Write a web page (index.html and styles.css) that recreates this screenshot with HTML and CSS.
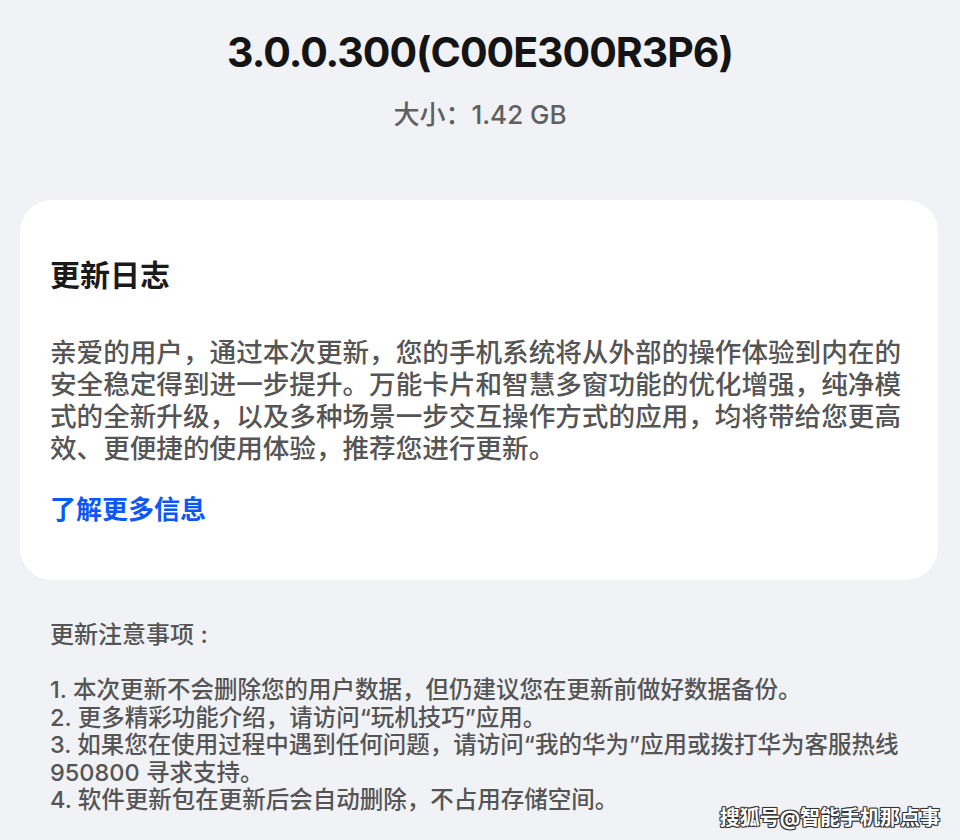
FILE: index.html
```html
<!DOCTYPE html>
<html lang="zh-CN">
<head>
  <meta charset="UTF-8">
  <title>软件更新</title>
  <link rel="stylesheet" href="styles.css">
</head>
<body>

  <div class="header">
    <h1 class="version">3.0.0.300(C00E300R3P6)</h1>
    <div class="size">大小：1.42 GB</div>
  </div>

  <div class="card">
    <h2>更新日志</h2>
    <p class="changelog">亲爱的用户，通过本次更新，您的手机系统将从外部的操作体验到内在的安全稳定得到进一步提升。万能卡片和智慧多窗功能的优化增强，纯净模式的全新升级，以及多种场景一步交互操作方式的应用，均将带给您更高效、更便捷的使用体验，推荐您进行更新。</p>
    <a href="#" class="more-link">了解更多信息</a>
  </div>

  <div class="notes">
    <h3>更新注意事项 :</h3>
    <ol class="note-list">
      <li>1. 本次更新不会删除您的用户数据，但仍建议您在更新前做好数据备份。</li>
      <li>2. 更多精彩功能介绍，请访问“玩机技巧”应用。</li>
      <li>3. 如果您在使用过程中遇到任何问题，请访问“我的华为”应用或拨打华为客服热线 950800 寻求支持。</li>
      <li>4. 软件更新包在更新后会自动删除，不占用存储空间。</li>
    </ol>
  </div>

  <div class="watermark">搜狐号@智能手机那点事</div>

</body>
</html>
```

FILE: styles.css
```css
* {
  box-sizing: border-box;
}
body {
  margin: 0;
  padding: 27px 0 0;
  background: #f1f2f6;
  font-family: Inter, "Noto Sans CJK SC", sans-serif;
  color: #1a1a1a;
  width: 960px;
  height: 840px;
  overflow: hidden;
  position: relative;
}
.header {
  text-align: center;
}
.version {
  margin: 0;
  font-size: 41px;
  line-height: 50px;
  font-weight: 700;
  letter-spacing: -1px;
  color: #141414;
}
.size {
  margin-top: 21px;
  font-size: 26px;
  line-height: 34px;
  font-weight: 500;
  color: #606060;
}
.card {
  background: #fff;
  margin: 68px 22px 0 20px;
  border-radius: 32px;
  padding: 55px 20px 54px 30px;
}
.card h2 {
  margin: 0;
  font-size: 30px;
  line-height: 40px;
  font-weight: 700;
  color: #1a1a1a;
}
.changelog {
  margin: 41px 0 0;
  font-size: 26.6px;
  line-height: 32px;
  font-weight: 500;
  color: #555;
}
.more-link {
  display: block;
  margin-top: 30px;
  font-size: 26px;
  line-height: 32px;
  font-weight: 700;
  color: #0a59f7;
  text-decoration: none;
}
.notes {
  padding: 40px 30px 0 50px;
}
.notes h3 {
  margin: 0;
  font-size: 24px;
  line-height: 30px;
  font-weight: 500;
  color: #555;
}
.note-list {
  list-style: none;
  margin: 26px 0 0;
  padding: 0;
  font-size: 23.5px;
  line-height: 27.5px;
  font-weight: 500;
  color: #555;
  max-width: 860px;
}
.watermark {
  position: absolute;
  right: 20px;
  bottom: 8px;
  font-size: 20px;
  line-height: 28px;
  color: #fff;
  font-weight: 700;
  text-shadow: -1px -1px 0 #333, 1px -1px 0 #333, -1px 1px 0 #333, 1px 1px 0 #333, 0 0 2px #000;
}
```
